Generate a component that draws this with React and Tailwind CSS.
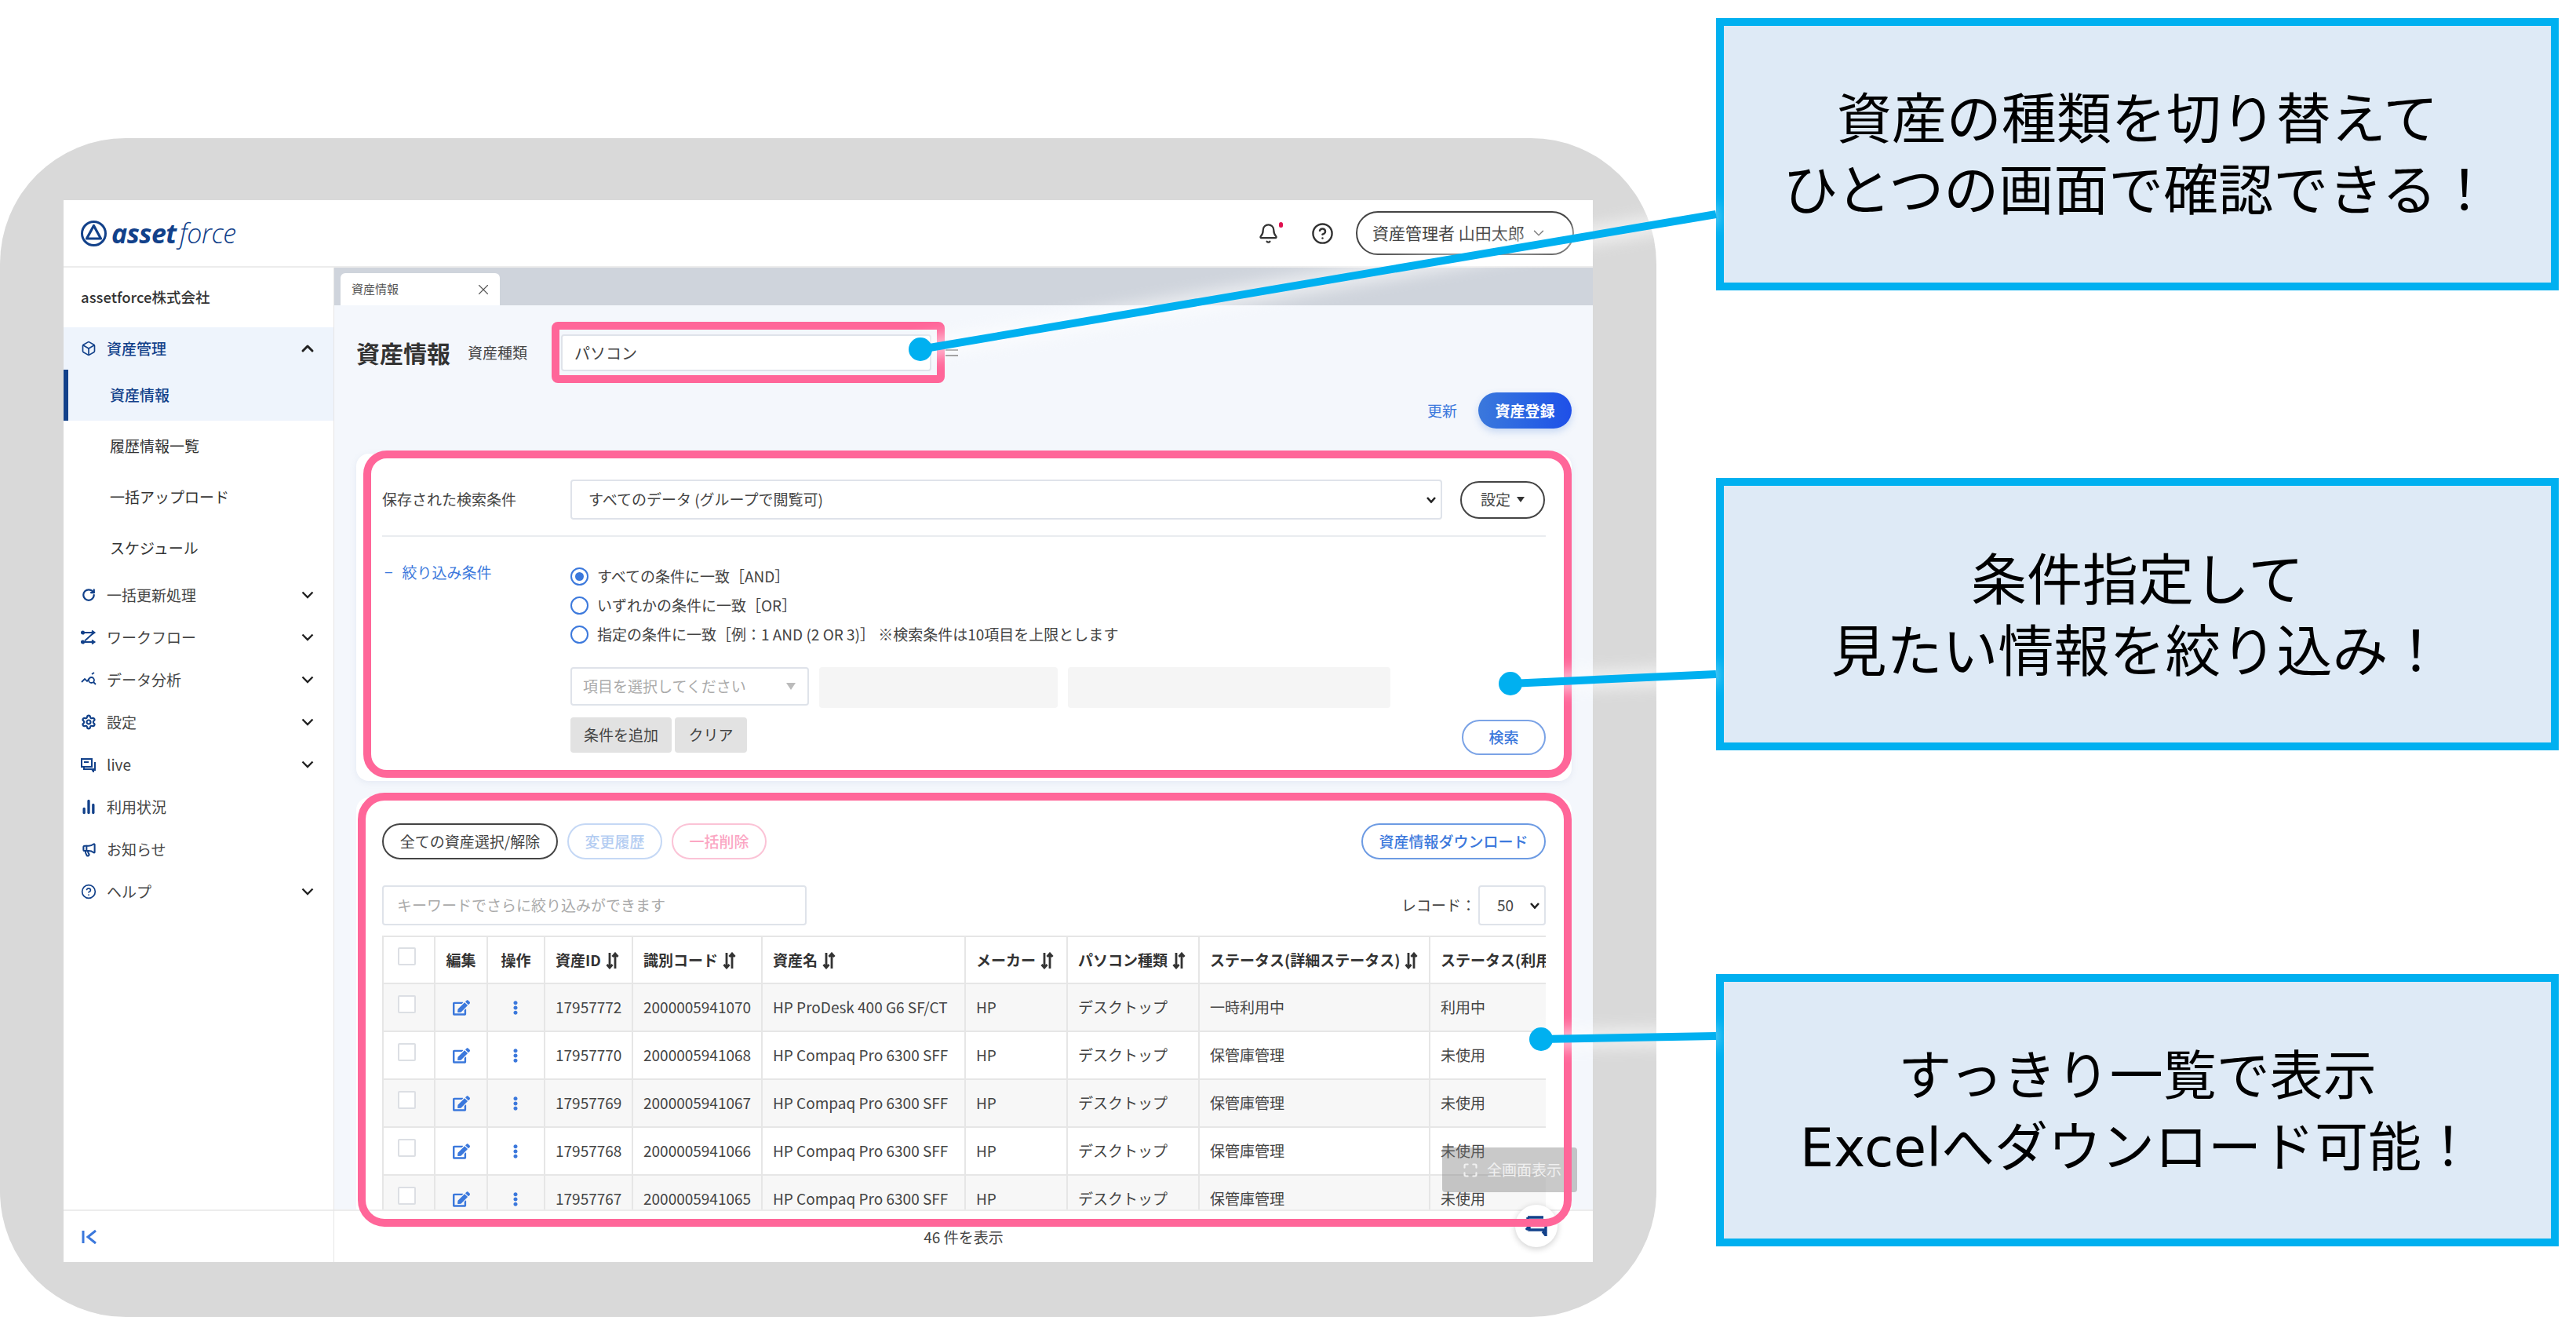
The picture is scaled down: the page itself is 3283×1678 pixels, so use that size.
import {
  Bell,
  Box,
  ChartNoAxesColumn,
  ChevronDown,
  ChevronUp,
  CircleHelp,
  Maximize,
  Megaphone,
  RotateCw,
  Settings,
  X,
} from 'lucide-react';
import { FaEdit, FaEllipsisV } from 'react-icons/fa';

const NAVY = '#12418a';

const WorkflowIcon = () => (
  <svg viewBox="0 0 20 20" className="w-5 h-5" fill="none" stroke={NAVY} strokeWidth="1.9">
    <circle cx="2.5" cy="4" r="1.6" fill={NAVY} />
    <circle cx="2.5" cy="16" r="1.6" fill={NAVY} />
    <path d="M4 4h13M14 1.5L17.5 4 14 6.5M4 16h13M14 13.5l3.5 2.5-3.5 2.5M5 14.5L15 5.5" />
  </svg>
);

const AnalyticsIcon = () => (
  <svg viewBox="0 0 20 20" className="w-5 h-5" fill="none" stroke={NAVY} strokeWidth="1.8">
    <path d="M1 13l4-4 3 3 3-4M14 3l3-2" />
    <circle cx="13.5" cy="10.5" r="3.5" />
    <path d="M16 13l3 3" />
  </svg>
);

const LiveIcon = () => (
  <svg viewBox="0 0 20 20" className="w-5 h-5" fill="none" stroke={NAVY} strokeWidth="2">
    <path d="M1 3h13v10H1zM4 13v3h12v3l-2-3M18 7v11" />
    <path d="M4 7h6" />
  </svg>
);

const SortIcon = () => (
  <svg viewBox="0 0 16 22" className="inline-block w-[17px] h-[22px] ml-[6px] align-[-4px]" fill="none" stroke="#333" strokeWidth="2.8">
    <path d="M4.5 1v19M1 16l3.5 4 3.5-4M11.5 21V2M8 6l3.5-4L15 6" />
  </svg>
);

const SelectChevron = () => (
  <svg viewBox="0 0 12 9" className="absolute right-[8px] top-1/2 -translate-y-1/2 w-[12px] h-[9px] pointer-events-none" fill="none" stroke="#222" strokeWidth="2.6">
    <path d="M1 1.5l5 5.5 5-5.5" />
  </svg>
);

const Logo = () => (
  <div className="flex items-center gap-[6px] text-[#12418a]">
    <svg viewBox="0 0 33 33" className="w-[33px] h-[33px]" fill="none" stroke={NAVY}>
      <circle cx="16.5" cy="16.5" r="15" strokeWidth="3" />
      <path d="M16.5 6.5L25.5 23H7.5z" strokeWidth="3.2" strokeLinejoin="round" />
    </svg>
    <span className="font-['Open_Sans',sans-serif] italic text-[34px] leading-none tracking-[-0.5px] font-bold">
      asset <span className="font-light -ml-[4px]">force</span>
    </span>
  </div>
);

const Chevron = () => (
  <svg viewBox="0 0 16 10" className="w-[16px] h-[10px] ml-auto mr-[25px]" fill="none" stroke="#222" strokeWidth="2.4">
    <path d="M1.5 1.5L8 8l6.5-6.5" />
  </svg>
);

const NavRow = ({ icon, label, more = true }) => (
  <div className="h-[54px] flex items-center pl-[22px] text-[19px] text-[#444]">
    <span className="w-5 h-5 mr-[13px] flex items-center justify-center shrink-0">{icon}</span>
    <span>{label}</span>
    {more && <Chevron />}
  </div>
);

const SubRow = ({ label }) => (
  <div className="h-[65px] flex items-center pl-[59px] text-[19px] text-[#333]">{label}</div>
);

const Sidebar = () => (
  <aside className="w-[345px] shrink-0 border-r border-[#e6e6e6] flex flex-col bg-white">
    <div className="flex-1">
      <div className="h-[76px] flex items-center pl-[22px] text-[18.5px] font-medium text-[#333]">assetforce株式会社</div>
      <div className="bg-[#eef4fc]">
        <div className="h-[54px] flex items-center pl-[22px] text-[19px] font-medium text-[#12418a]">
          <Box size={20} color={NAVY} strokeWidth={2} className="mr-[13px]" />
          <span>資産管理</span>
          <ChevronUp size={24} color="#222" strokeWidth={3} className="ml-auto mr-[21px]" />
        </div>
        <div className="h-[65px] flex items-center pl-[53px] border-l-[6px] border-[#12418a] text-[19px] font-medium text-[#12418a]">資産情報</div>
      </div>
      <SubRow label="履歴情報一覧" />
      <SubRow label="一括アップロード" />
      <SubRow label="スケジュール" />
      <NavRow icon={<RotateCw size={18} color={NAVY} strokeWidth={3} />} label="一括更新処理" />
      <NavRow icon={<WorkflowIcon />} label="ワークフロー" />
      <NavRow icon={<AnalyticsIcon />} label="データ分析" />
      <NavRow icon={<Settings size={20} color={NAVY} strokeWidth={2.6} />} label="設定" />
      <NavRow icon={<LiveIcon />} label="live" />
      <NavRow icon={<ChartNoAxesColumn size={20} color={NAVY} strokeWidth={4} />} label="利用状況" more={false} />
      <NavRow icon={<Megaphone size={19} color={NAVY} strokeWidth={2.6} />} label="お知らせ" more={false} />
      <NavRow icon={<CircleHelp size={20} color={NAVY} strokeWidth={2} />} label="ヘルプ" />
    </div>
    <div className="h-[67px] border-t-2 border-[#ececec] flex items-center pl-[23px]">
      <svg viewBox="0 0 20 20" className="w-5 h-5" fill="none" stroke="#3b78dc" strokeWidth="3">
        <path d="M2 2v16M18 2l-10 8 10 8" />
      </svg>
    </div>
  </aside>
);

const pillBase = 'flex items-center justify-center rounded-full text-[19px]';

const FilterCard = () => (
  <section className="h-[417px] shrink-0 rounded-2xl bg-white shadow-[0_2px_8px_rgba(120,140,180,0.12)] pt-[33px] px-[33px]">
    <div className="flex items-center h-[51px]">
      <div className="w-[240px] text-[19px] text-[#444]">保存された検索条件</div>
      <div className="relative w-[1111px] h-[51px]">
        <select
          defaultValue="all"
          className="appearance-none w-full h-full border-2 border-[#dfe3ea] rounded pl-[21px] pr-2 text-[19px] text-[#444] bg-white"
        >
          <option value="all">すべてのデータ (グループで閲覧可)</option>
        </select>
        <SelectChevron />
      </div>
      <div className={`${pillBase} ml-[23px] w-[108px] h-[48px] border-2 border-[#444] text-[#444]`}>
        設定
        <span className="ml-2 border-x-[5px] border-t-[7px] border-x-transparent border-t-[#333]" />
      </div>
    </div>
    <div className="mt-[20px] border-t-2 border-[#e9ecef]" />
    <div className="flex mt-[31px]">
      <div className="w-[240px] pl-[3px] text-[19px] leading-[28px] text-[#3b78dc]">
        <span className="mr-[12px]">−</span>絞り込み条件
      </div>
      <div className="flex-1">
        <div className="text-[19px] text-[#444] pt-[1px]">
          {[
            ['すべての条件に一致［AND］', true],
            ['いずれかの条件に一致［OR］', false],
            ['指定の条件に一致［例：1 AND (2 OR 3)］ ※検索条件は10項目を上限とします', false],
          ].map(([label, on]) => (
            <div key={label} className="h-[37px] flex items-center">
              <span className="w-[23px] h-[23px] rounded-full border-2 border-[#3b78dc] flex items-center justify-center mr-[11px]">
                {on && <span className="w-[11px] h-[11px] rounded-full bg-[#3b78dc]" />}
              </span>
              {label}
            </div>
          ))}
        </div>
        <div className="flex mt-[23px] gap-[13px]">
          <div className="w-[304px] h-[49px] border-2 border-[#dfe3ea] rounded flex items-center pl-[14px] pr-[15px] text-[19px] text-[#aaa] bg-white">
            項目を選択してください
            <span className="ml-auto border-x-[6px] border-t-[9px] border-x-transparent border-t-[#bbb]" />
          </div>
          <div className="w-[304px] h-[52px] rounded bg-[#f5f5f5]" />
          <div className="w-[411px] h-[52px] rounded bg-[#f5f5f5]" />
        </div>
        <div className="flex items-start mt-[12px]">
          <div className="w-[129px] h-[45px] rounded bg-[#e2e2e2] flex items-center justify-center text-[19px] text-[#444]">条件を追加</div>
          <div className="w-[92px] h-[45px] ml-[4px] rounded bg-[#e2e2e2] flex items-center justify-center text-[19px] text-[#444]">クリア</div>
          <div className={`${pillBase} ml-auto mt-[3px] w-[107px] h-[45px] border-2 border-[#7ba3e6] text-[#3b78dc] font-medium`}>検索</div>
        </div>
      </div>
    </div>
  </section>
);

const columns = [
  { label: '', w: 'w-[66px]' },
  { label: '編集', w: 'w-[67px]' },
  { label: '操作', w: 'w-[73px]' },
  { label: '資産ID', w: 'w-[112px]', sort: true },
  { label: '識別コード', w: 'w-[165px]', sort: true },
  { label: '資産名', w: 'w-[259px]', sort: true },
  { label: 'メーカー', w: 'w-[130px]', sort: true },
  { label: 'パソコン種類', w: 'w-[168px]', sort: true },
  { label: 'ステータス(詳細ステータス)', w: 'w-[294px]', sort: true },
  { label: 'ステータス(利用状況)', w: 'w-[300px]' },
];

const rows = [
  ['17957772', '2000005941070', 'HP ProDesk 400 G6 SF/CT', '一時利用中', '利用中'],
  ['17957770', '2000005941068', 'HP Compaq Pro 6300 SFF', '保管庫管理', '未使用'],
  ['17957769', '2000005941067', 'HP Compaq Pro 6300 SFF', '保管庫管理', '未使用'],
  ['17957768', '2000005941066', 'HP Compaq Pro 6300 SFF', '保管庫管理', '未使用'],
  ['17957767', '2000005941065', 'HP Compaq Pro 6300 SFF', '保管庫管理', '未使用'],
];

const Checkbox = () => <div className="w-[23px] h-[23px] border-2 border-[#dcdfe4] bg-white rounded-[2px] ml-[18px] mb-[9px]" />;

const AssetTable = () => (
  <div className="mt-[13px] overflow-hidden">
    <table className="table-fixed w-[1634px] border-collapse text-[19px] text-[#444]">
      <colgroup>
        {columns.map((c) => (
          <col key={c.label} className={c.w} />
        ))}
      </colgroup>
      <thead>
        <tr className="h-[60px]">
          {columns.map((c, i) => (
            <th
              key={c.label}
              className={`border-2 border-[#e6e6e6] font-bold text-[#333] whitespace-nowrap overflow-hidden ${i === 0 ? 'px-0 text-left' : i < 3 ? 'px-0 text-center' : 'px-[13px] text-left'}`}
            >
              {i === 0 ? <Checkbox /> : c.label}
              {c.sort && <SortIcon />}
            </th>
          ))}
        </tr>
      </thead>
      <tbody>
        {rows.map((r, i) => (
          <tr key={r[0]} className={`h-[61px] ${i % 2 === 0 ? 'bg-[#f7f7f7]' : 'bg-white'}`}>
            <td className="border-2 border-[#e6e6e6]"><Checkbox /></td>
            <td className="border-2 border-[#e6e6e6]"><FaEdit size={22} color="#3b78dc" className="mx-auto" /></td>
            <td className="border-2 border-[#e6e6e6] pr-[2px]"><FaEllipsisV size={18} color="#3b78dc" className="mx-auto" /></td>
            <td className="border-2 border-[#e6e6e6] px-[13px]">{r[0]}</td>
            <td className="border-2 border-[#e6e6e6] px-[13px]">{r[1]}</td>
            <td className="border-2 border-[#e6e6e6] px-[13px] whitespace-nowrap">{r[2]}</td>
            <td className="border-2 border-[#e6e6e6] px-[13px]">HP</td>
            <td className="border-2 border-[#e6e6e6] px-[13px]">デスクトップ</td>
            <td className="border-2 border-[#e6e6e6] px-[13px]">{r[3]}</td>
            <td className="border-2 border-[#e6e6e6] px-[13px]">{r[4]}</td>
          </tr>
        ))}
      </tbody>
    </table>
  </div>
);

const ListCard = () => (
  <section className="mt-[21px] shrink-0 rounded-t-2xl bg-white pt-[33px] px-[33px]">
    <div className="flex items-center h-[46px] gap-[12px]">
      <div className={`${pillBase} w-[224px] h-[46px] border-2 border-[#444] text-[#444]`}>全ての資産選択/解除</div>
      <div className={`${pillBase} w-[121px] h-[46px] border-2 border-[#c5d8f5] text-[#b4cdf2] font-medium`}>変更履歴</div>
      <div className={`${pillBase} w-[121px] h-[46px] border-2 border-[#fbc3d6] text-[#fba6c3] font-medium`}>一括削除</div>
      <div className={`${pillBase} ml-auto w-[235px] h-[46px] border-2 border-[#6d9be3] text-[#3b78dc] font-medium`}>資産情報ダウンロード</div>
    </div>
    <div className="flex items-center mt-[33px]">
      <div className="w-[541px] h-[51px] border-2 border-[#dfe3ea] rounded flex items-center pl-[17px] text-[19px] text-[#aaa]">
        キーワードでさらに絞り込みができます
      </div>
      <div className="ml-auto text-[19px] text-[#444]">レコード：</div>
      <div className="relative ml-[3px] w-[86px] h-[51px]">
        <select defaultValue="50" className="appearance-none w-full h-full border-2 border-[#dfe3ea] rounded pl-[22px] text-[19px] text-[#444] bg-white">
          <option value="50">50</option>
        </select>
        <SelectChevron />
      </div>
    </div>
    <AssetTable />
  </section>
);

const Main = () => (
  <main className="flex-1 min-w-0 flex flex-col">
    <div className="h-[48px] shrink-0 bg-[#cfd4dc] flex items-end pl-[8px]">
      <div className="w-[203px] h-[41px] bg-white rounded-t-md flex items-center pl-[14px] pr-[10px] text-[15px] text-[#555]">
        資産情報
        <X size={22} strokeWidth={1.2} color="#555" className="ml-auto" />
      </div>
    </div>
    <div className="flex-1 min-h-0 overflow-hidden bg-[#f4f7fc] pl-[28px] pr-[27px] flex flex-col">
      <div className="mt-[37px] h-[47px] shrink-0 flex items-center">
        <h1 className="text-[30px] font-bold text-[#333]">資産情報</h1>
        <span className="ml-[22px] text-[19px] text-[#444]">資産種類</span>
        <div className="ml-[43px] w-[472px] h-[47px] border-2 border-[#dfe3ea] rounded bg-white flex items-center pl-[15px] text-[20px] text-[#444]">パソコン</div>
        <div className="ml-[18px] w-[16px] h-[9px] border-y-2 border-[#888]" />
      </div>
      <div className="mt-[27px] shrink-0 flex items-center justify-end">
        <span className="text-[19px] text-[#3b78dc]">更新</span>
        <div className={`${pillBase} ml-[27px] w-[119px] h-[46px] bg-linear-to-r from-[#3b78dc] to-[#1f4fe8] text-white font-bold shadow-[0_4px_10px_rgba(59,120,220,0.25)]`}>資産登録</div>
      </div>
      <div className="mt-[32px]">
        <FilterCard />
        <ListCard />
      </div>
    </div>
    <div className="h-[67px] shrink-0 border-t-2 border-[#ececec] bg-white flex items-center justify-center pt-[2px] text-[19px] text-[#444]">46 件を表示</div>
  </main>
);

const Callout = ({ lines, className }) => (
  <div className={`h-[347px] shrink-0 border-[10px] border-[#00b0f0] bg-[#deeaf6] flex flex-col items-center justify-center pt-[4px] leading-[91px] text-black ${className}`}>
    {lines.map((l) => (
      <div key={l}>{l}</div>
    ))}
  </div>
);

const Connectors = () => (
  <svg viewBox="0 0 3283 1678" className="absolute inset-0 w-[3283px] h-[1678px] pointer-events-none">
    <defs>
      <filter id="glow" x="-20%" y="-200%" width="140%" height="500%">
        <feGaussianBlur stdDeviation="9" />
      </filter>
    </defs>
    <g stroke="#fff" strokeWidth="26" opacity="0.55" filter="url(#glow)">
      <path d="M1173 445L2187 273" />
      <path d="M1925 871L2187 859" />
      <path d="M1964 1324L2187 1320" />
    </g>
    <g stroke="#00b0f0" strokeWidth="10">
      <path d="M1173 445L2187 273" />
      <path d="M1925 871L2187 859" />
      <path d="M1964 1324L2187 1320" />
    </g>
    <g fill="#00b0f0">
      <circle cx="1173" cy="445" r="15" />
      <circle cx="1925" cy="871" r="15" />
      <circle cx="1964" cy="1324" r="15" />
    </g>
  </svg>
);

export default function App() {
  return (
    <div className="relative w-[3283px] h-[1678px] overflow-hidden bg-white flex font-['Noto_Sans_CJK_JP','Noto_Sans',sans-serif]">
      <div className="w-[2111px] h-[1502px] mt-[176px] shrink-0 rounded-[160px] bg-[#d9d9d9] pt-[79px] pb-[70px] px-[81px]">
        <div className="h-full bg-white flex flex-col">
          <header className="h-[86px] shrink-0 border-b-2 border-[#ececec] flex items-center pl-[22px] pr-[24px]">
            <Logo />
            <div className="relative ml-auto">
              <Bell size={27} strokeWidth={2} color="#333" />
              <span className="absolute -top-[1px] -right-[5px] w-[5px] h-[7px] rounded-full bg-[#e0114f]" />
            </div>
            <CircleHelp size={29} strokeWidth={2} color="#333" className="ml-[41px]" />
            <div className="ml-[28px] w-[278px] h-[56px] rounded-full border-2 border-[#444] flex items-center pl-[19px] text-[21px] text-[#444] whitespace-nowrap">
              資産管理者 山田太郎
              <ChevronDown size={22} strokeWidth={1.5} color="#555" className="ml-[7px]" />
            </div>
          </header>
          <div className="flex-1 min-h-0 flex">
            <Sidebar />
            <Main />
          </div>
        </div>
      </div>

      <div className="ml-[76px] w-[1074px] shrink-0 flex flex-col font-['DejaVu_Sans','Noto_Sans_CJK_JP',sans-serif]">
        <Callout className="mt-[23px] text-[70px]" lines={['資産の種類を切り替えて', 'ひとつの画面で確認できる！']} />
        <Callout className="mt-[239px] text-[71px]" lines={['条件指定して', '見たい情報を絞り込み！']} />
        <Callout className="mt-[285px] text-[68px]" lines={['すっきり一覧で表示', 'Excelへダウンロード可能！']} />
      </div>

      {/* floating widgets of the app */}
      <div className="absolute left-[1838px] top-[1462px] w-[172px] h-[57px] rounded bg-[rgba(120,120,120,0.4)] flex items-center pl-[26px] text-[19px] text-[#f0f0f0]">
        <Maximize size={20} strokeWidth={2.6} color="#f0f0f0" className="mr-[11px]" />
        全画面表示
      </div>
      <div className="absolute left-[1931px] top-[1535px] w-[54px] h-[54px] rounded-full bg-white shadow-[0_2px_8px_rgba(0,0,0,0.2)] flex items-center justify-center">
        <svg viewBox="0 0 30 26" className="w-[30px] h-[26px]" fill="none" stroke={NAVY} strokeWidth="3.4">
          <path d="M4 2h20M4 2v11M6 13v5h21M27 13v12l-4-5M6 13l-4 5" />
        </svg>
      </div>

      {/* pink highlights */}
      <div className="absolute left-[703px] top-[410px] w-[501px] h-[78px] border-[10px] border-[#ff6699] rounded-lg" />
      <div className="absolute left-[463px] top-[574px] w-[1540px] h-[417px] border-[10px] border-[#ff6699] rounded-[30px]" />
      <div className="absolute left-[456px] top-[1010px] w-[1547px] h-[553px] border-[10px] border-[#ff6699] rounded-[34px]" />

      <Connectors />
    </div>
  );
}
